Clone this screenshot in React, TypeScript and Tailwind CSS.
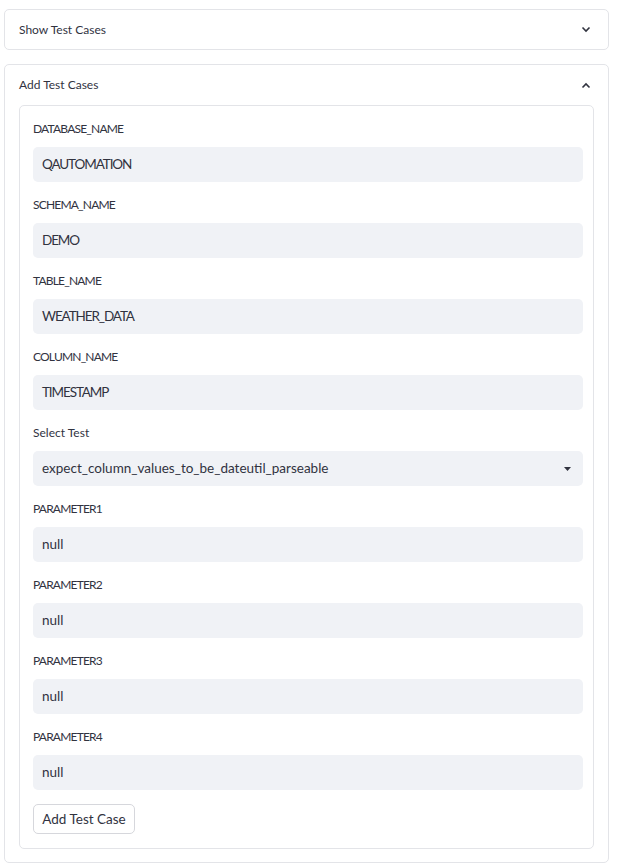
import React from 'react';

const FONT = "font-['Source_Sans_Pro','Lato','Liberation_Sans',sans-serif]";

const fields = [
  { label: 'DATABASE_NAME', value: 'QAUTOMATION' },
  { label: 'SCHEMA_NAME', value: 'DEMO' },
  { label: 'TABLE_NAME', value: 'WEATHER_DATA' },
  { label: 'COLUMN_NAME', value: 'TIMESTAMP' },
  { label: 'Select Test', value: 'expect_column_values_to_be_dateutil_parseable', select: true },
  { label: 'PARAMETER1', value: 'null' },
  { label: 'PARAMETER2', value: 'null' },
  { label: 'PARAMETER3', value: 'null' },
  { label: 'PARAMETER4', value: 'null' },
];

// Lato caps run wider than the original font, pull them in a bit
const isCaps = (s: string) => s === s.toUpperCase();

const Chevron = ({ up }: { up?: boolean }) => (
  <svg width="10" height="7" viewBox="0 0 10 7" className="text-[#31333f]">
    <polyline
      points={up ? '1.5,5.5 5,2 8.5,5.5' : '1.5,1.5 5,5 8.5,1.5'}
      fill="none"
      stroke="currentColor"
      strokeWidth="1.6"
    />
  </svg>
);

const Field = ({ label, value, select }: { label: string; value: string; select?: boolean }) => (
  <div className="mb-[14px]">
    <div
      className={`h-[18px] text-[12px] leading-[18px] mb-[9px] text-[#31333f] ${
        isCaps(label) ? 'tracking-[-0.8px]' : ''
      }`}
    >
      {label}
    </div>
    <div className="h-[35px] rounded-[5px] bg-[#f0f2f6] pl-[9px] pr-[12px] flex items-center justify-between text-[13.5px] text-[#31333f]">
      <span className={isCaps(value) ? 'tracking-[-1.1px]' : ''}>{value}</span>
      {select && (
        <svg width="7" height="4" viewBox="0 0 7 4">
          <polygon points="0,0 7,0 3.5,4" fill="#31333f" />
        </svg>
      )}
    </div>
  </div>
);

export default function App() {
  return (
    <div className={`${FONT} bg-white min-h-screen pt-[9px] pl-[4px] w-[619px]`}>
      <div className="w-[605px] border border-[#e3e4e8] rounded-[5px]">
        <div className="h-[39px] flex items-center justify-between pl-[14px] pr-[17px] text-[12px] text-[#31333f]">
          <span>Show Test Cases</span>
          <Chevron />
        </div>
      </div>

      <div className="w-[605px] mt-[14px] border border-[#e3e4e8] rounded-[5px]">
        <div className="h-[40px] flex items-center justify-between pl-[14px] pr-[17px] text-[12px] text-[#31333f]">
          <span>Add Test Cases</span>
          <Chevron up />
        </div>
        <div className="px-[14px] pb-[13px]">
          <div className="border border-[#e3e4e8] rounded-[5px] pt-[14px] pb-[14px] pl-[13px] pr-[10px]">
            {fields.map((f) => (
              <Field key={f.label} {...f} />
            ))}
            <button className="h-[30px] w-[102px] border border-[#d6d7dc] rounded-[5px] bg-white text-[13.5px] text-[#31333f]">
              Add Test Case
            </button>
          </div>
        </div>
      </div>
    </div>
  );
}
